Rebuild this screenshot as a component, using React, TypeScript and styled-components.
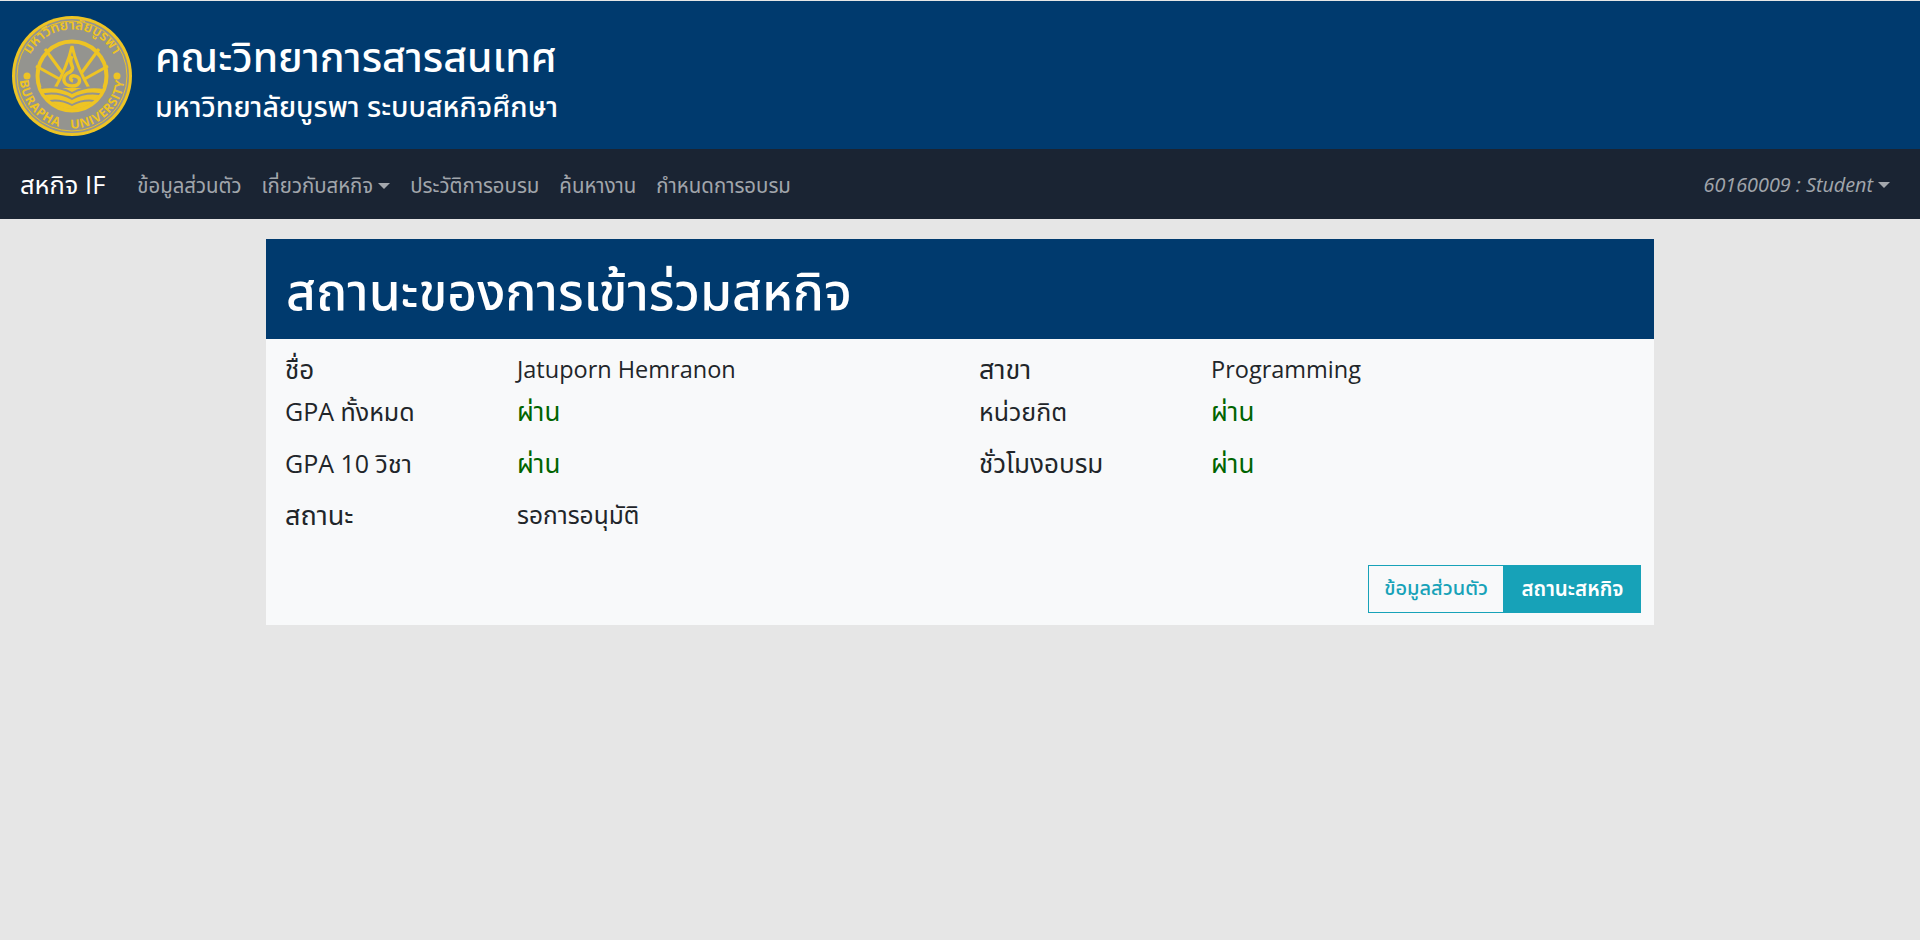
import React from "react";
import styled, { createGlobalStyle } from "styled-components";

const GlobalStyle = createGlobalStyle`
  html, body {
    margin: 0;
    padding: 0;
    background: #e6e6e6;
    font-family: "Open Sans", "Noto Sans", "Noto Sans Thai", "Noto Sans CJK SC", sans-serif;
  }
`;

const Page = styled.div`
  min-height: 940px;
  display: flex;
  flex-direction: column;
  background: #e6e6e6;
`;

const Banner = styled.header`
  height: 146px;
  margin-top: 1px;
  padding: 2px 0 0 12px;
  background: #003a6e;
  display: flex;
  align-items: center;
  gap: 23px;
`;

const BannerText = styled.div`
  display: flex;
  flex-direction: column;
  padding-top: 6px;
  color: #fff;
`;

const BannerTitle = styled.h1`
  margin: 0;
  font-size: 41px;
  font-weight: 500;
  line-height: 54px;
`;

const BannerSub = styled.h2`
  margin: 0;
  font-size: 28.5px;
  font-weight: 500;
  line-height: 46px;
`;

const Nav = styled.nav`
  height: 70px;
  background: #1a2433;
  display: flex;
  align-items: center;
  padding: 4px 30px 0 20px;
  box-sizing: border-box;
`;

const Brand = styled.a`
  color: #fff;
  font-size: 25.5px;
  margin-right: 32px;
`;

const NavLinks = styled.div`
  display: flex;
  gap: 20px;
  flex: 1;
`;

const NavLink = styled.a<{ $caret?: boolean }>`
  color: rgba(255, 255, 255, 0.6);
  font-size: 20.4px;
  display: flex;
  align-items: center;
  ${({ $caret }) =>
    $caret &&
    `
    &::after {
      content: "";
      margin-left: 5px;
      border-top: 6px solid currentColor;
      border-left: 6px solid transparent;
      border-right: 6px solid transparent;
    }
  `}
`;

const UserLink = styled(NavLink)`
  font-style: italic;
  font-size: 19.8px;
  line-height: 26px;
  margin-top: -2px;
`;

const Card = styled.main`
  width: 1388px;
  margin: 20px auto 0;
  background: #f8f9fa;
`;

const CardHead = styled.div`
  height: 100px;
  box-sizing: border-box;
  padding: 9px 0 0 20px;
  background: #003a6e;
  color: #fff;
  display: flex;
  align-items: center;
  font-size: 51.5px;
  font-weight: 500;
`;

const CardBody = styled.div`
  padding: 12px 13px 12px 19px;
`;

const InfoGrid = styled.div`
  display: grid;
  grid-template-columns: 232px 462px 232px 1fr;
  color: #212529;
`;

const Cell = styled.div<{ $pass?: boolean; $height: number; $size: number }>`
  height: ${({ $height }) => $height}px;
  line-height: 36px;
  font-size: ${({ $size }) => $size}px;
  color: ${({ $pass }) => ($pass ? "#006400" : "inherit")};
`;

const Actions = styled.div`
  display: flex;
  justify-content: flex-end;
  margin-top: 16px;
`;

const TabButton = styled.button<{ $active?: boolean }>`
  height: 48px;
  padding: 0 ${({ $active }) => ($active ? "16.5px" : "15px")};
  border: 1px solid #17a2b8;
  background: ${({ $active }) => ($active ? "#17a2b8" : "transparent")};
  color: ${({ $active }) => ($active ? "#fff" : "#17a2b8")};
  font-family: inherit;
  font-size: ${({ $active }) => ($active ? "20.5px" : "20px")};
  font-weight: ${({ $active }) => ($active ? 600 : 500)};
`;

const GOLD = "#eec423";
const GREY = "#94948f";

const Logo = () => (
  <svg width="120" height="120" viewBox="0 0 120 120" aria-hidden="true">
    <defs>
      <path id="logoTop" d="M 15 74 A 47 47 0 1 1 105 74" />
      <path id="logoBottom" d="M 7.5 60 A 52.5 52.5 0 0 0 112.5 60" />
      <clipPath id="logoInner">
        <circle cx="60" cy="60" r="33" />
      </clipPath>
    </defs>
    <circle cx="60" cy="60" r="60" fill={GOLD} />
    <circle cx="60" cy="60" r="57" fill={GREY} />
    <circle cx="60" cy="60" r="55" fill="none" stroke={GOLD} strokeWidth="1" />
    <text fontSize="14" fontWeight="600" fill={GOLD} textAnchor="middle">
      <textPath href="#logoTop" startOffset="50%">มหาวิทยาลัยบูรพา</textPath>
    </text>
    <text fontSize="12.5" fontWeight="700" fill={GOLD} textAnchor="middle" letterSpacing="0.6">
      <textPath href="#logoBottom" startOffset="50%" xmlSpace="preserve">BURAPHA   UNIVERSITY</textPath>
    </text>
    <circle cx="15" cy="60" r="3.5" fill={GOLD} />
    <circle cx="105" cy="60" r="3.5" fill={GOLD} />
    <circle cx="60" cy="60" r="34.5" fill={GREY} stroke={GOLD} strokeWidth="4" />
    <path d="M60 70 L24 50 M60 70 L33 33 M60 70 L87 33 M60 70 L96 50" stroke={GOLD} strokeWidth="3" />
    <path d="M60 30 C57 44 50 60 42 74 L78 74 C70 60 63 44 60 30 Z" fill={GREY} stroke={GOLD} strokeWidth="3" />
    <path d="M60 40 C55 48 65 51 58 56 C49 59 50 70 60 70 C69 70 70 61 63 60 C58 59 57 64 61 65" fill="none" stroke={GOLD} strokeWidth="3.5" />
    <g clipPath="url(#logoInner)">
      <rect x="20" y="72" width="80" height="30" fill={GOLD} />
      <path d="M24 73 Q44 68 60 77 Q76 68 96 73 M24 80 Q44 74 60 83 Q76 74 96 80 M28 87 Q46 81 60 89 Q74 81 92 87" fill="none" stroke={GREY} strokeWidth="2" />
    </g>
  </svg>
);

const rows = [
  {
    height: 42,
    cells: [
      { text: "ชื่อ", size: 26 },
      { text: "Jatuporn Hemranon", size: 23.5 },
      { text: "สาขา", size: 27 },
      { text: "Programming", size: 23.5 },
    ],
  },
  {
    height: 52,
    cells: [
      { text: "GPA ทั้งหมด", size: 25 },
      { text: "ผ่าน", size: 26, pass: true },
      { text: "หน่วยกิต", size: 25 },
      { text: "ผ่าน", size: 26, pass: true },
    ],
  },
  {
    height: 52,
    cells: [
      { text: "GPA 10 วิชา", size: 25 },
      { text: "ผ่าน", size: 26, pass: true },
      { text: "ชั่วโมงอบรม", size: 26 },
      { text: "ผ่าน", size: 26, pass: true },
    ],
  },
  {
    height: 52,
    cells: [
      { text: "สถานะ", size: 27 },
      { text: "รอการอนุมัติ", size: 24.5 },
      { text: "", size: 24 },
      { text: "", size: 24 },
    ],
  },
];

const App: React.FC = () => {
  return (
    <Page>
      <GlobalStyle />
      <Banner>
        <Logo />
        <BannerText>
          <BannerTitle>คณะวิทยาการสารสนเทศ</BannerTitle>
          <BannerSub>มหาวิทยาลัยบูรพา ระบบสหกิจศึกษา</BannerSub>
        </BannerText>
      </Banner>
      <Nav>
        <Brand>สหกิจ IF</Brand>
        <NavLinks>
          <NavLink>ข้อมูลส่วนตัว</NavLink>
          <NavLink $caret>เกี่ยวกับสหกิจ</NavLink>
          <NavLink>ประวัติการอบรม</NavLink>
          <NavLink>ค้นหางาน</NavLink>
          <NavLink>กำหนดการอบรม</NavLink>
        </NavLinks>
        <UserLink $caret>60160009 : Student</UserLink>
      </Nav>
      <Card>
        <CardHead>สถานะของการเข้าร่วมสหกิจ</CardHead>
        <CardBody>
          <InfoGrid>
            {rows.map((row, r) =>
              row.cells.map((cell, i) => (
                <Cell key={`${r}-${i}`} $height={row.height} $size={cell.size} $pass={cell.pass}>
                  {cell.text}
                </Cell>
              ))
            )}
          </InfoGrid>
          <Actions>
            <TabButton>ข้อมูลส่วนตัว</TabButton>
            <TabButton $active>สถานะสหกิจ</TabButton>
          </Actions>
        </CardBody>
      </Card>
    </Page>
  );
};

export default App;
